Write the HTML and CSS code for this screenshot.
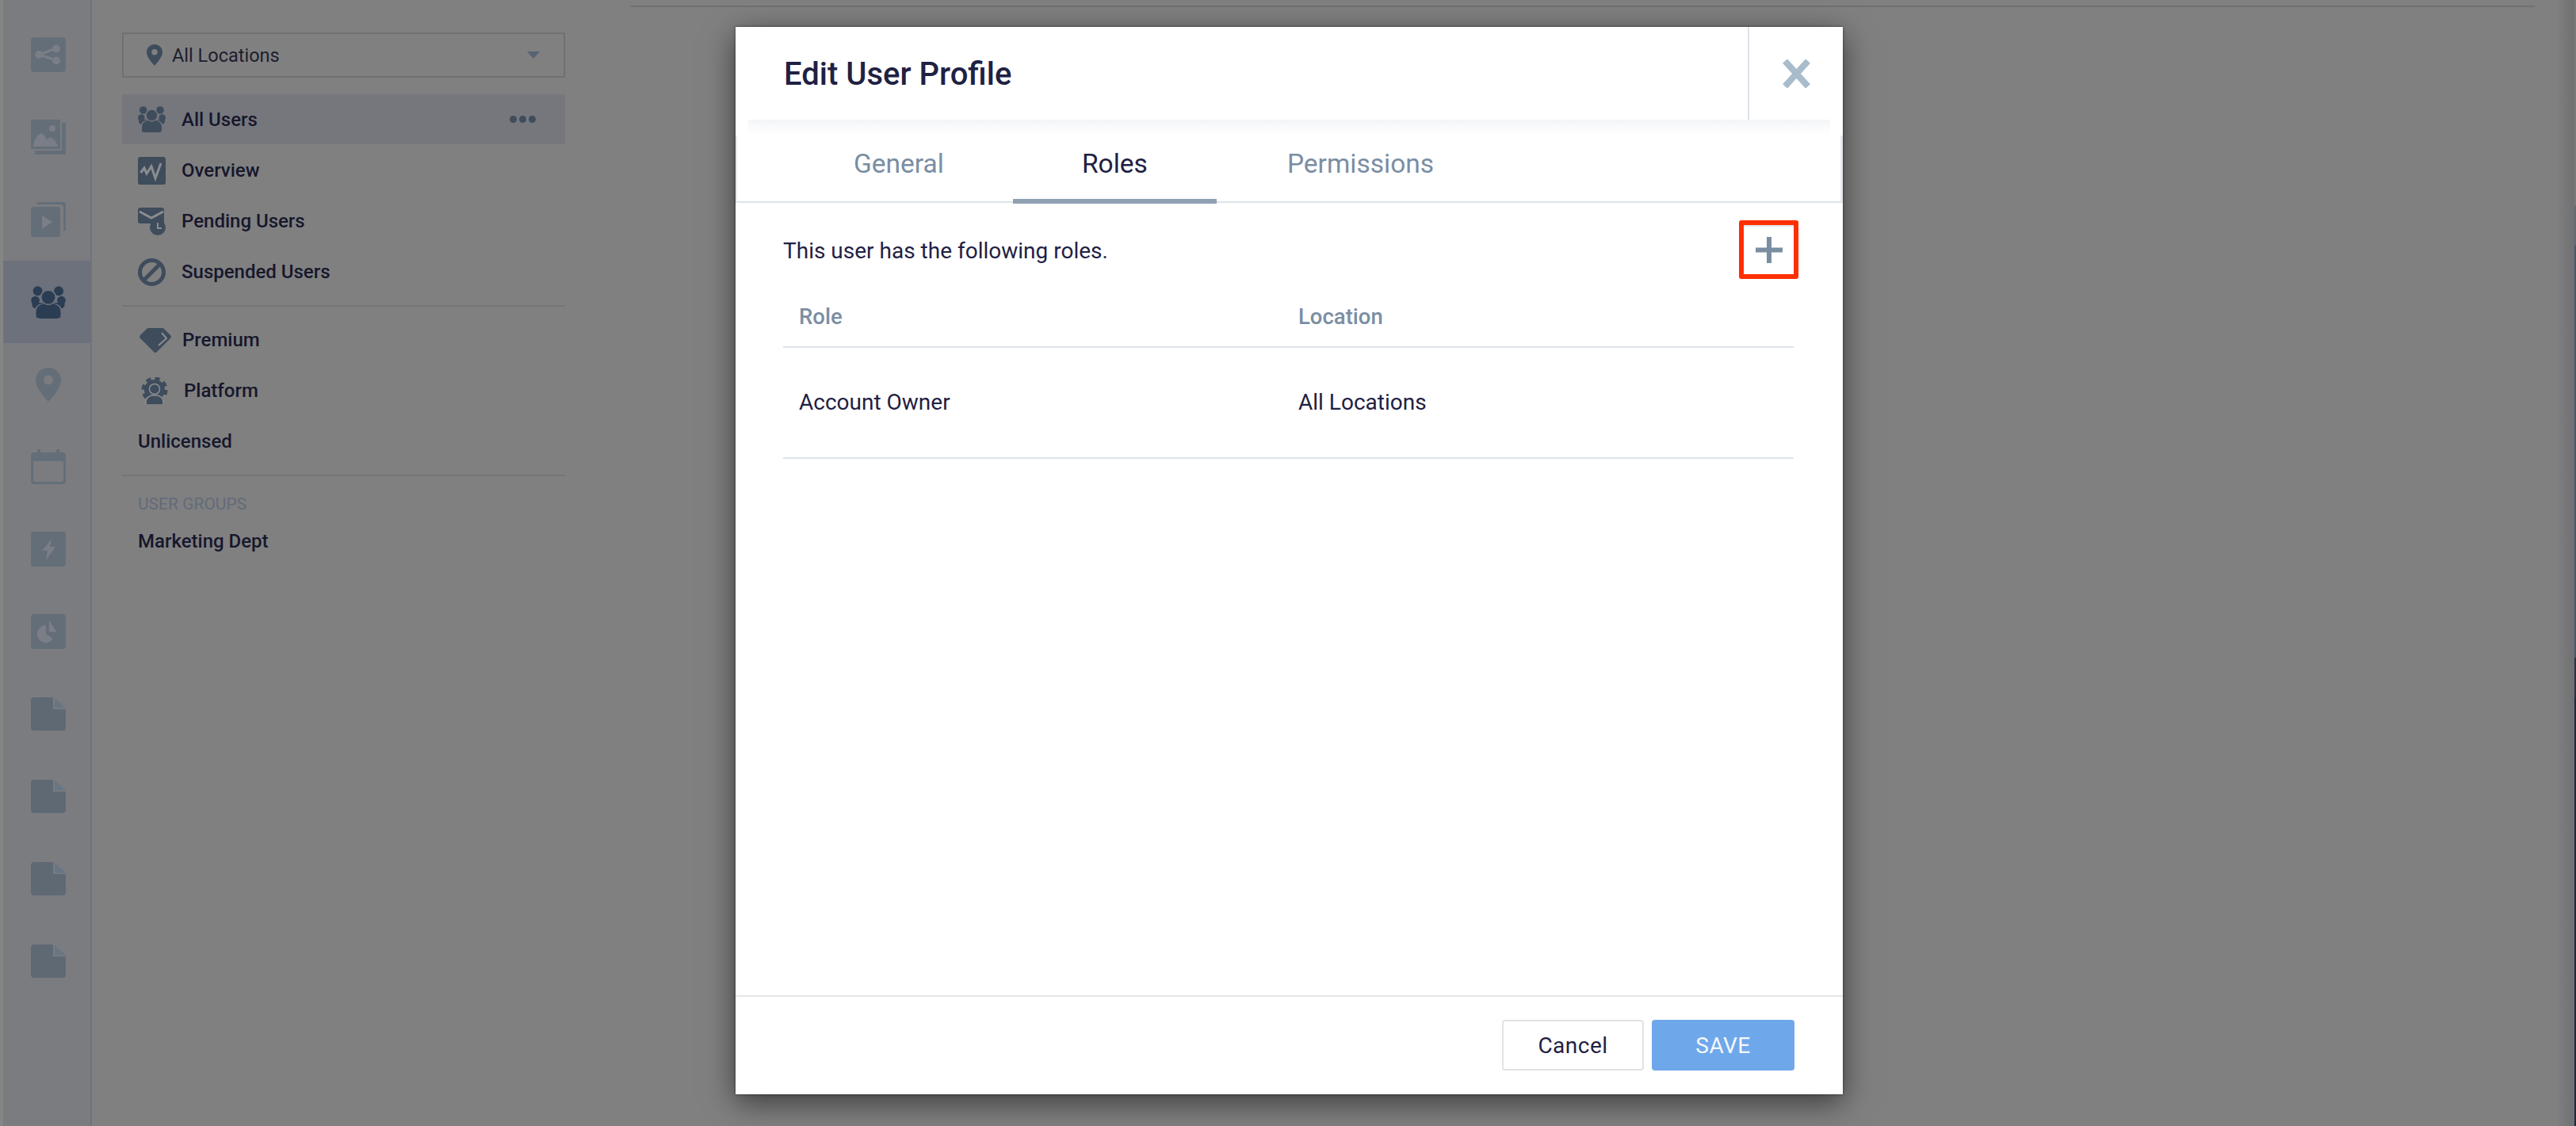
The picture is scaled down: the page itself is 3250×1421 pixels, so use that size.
FILE: index.html
```html
<!DOCTYPE html>
<html lang="en">
<head>
<meta charset="utf-8">
<title>Edit User Profile</title>
<link rel="stylesheet" href="styles.css">
</head>
<body>
<svg class="defs" width="0" height="0" aria-hidden="true">
  <symbol id="i-users" viewBox="0 0 35 33">
    <circle class="ink" cx="6.7" cy="5" r="4.8"/><circle class="ink" cx="28" cy="5" r="4.8"/>
    <circle class="ink" cx="4.3" cy="14.5" r="4.3"/><circle class="ink" cx="30.7" cy="14.5" r="4.3"/>
    <path class="ink" d="M1 17h33v3q-1 3-5 3H6q-4 0-5-3z"/>
    <circle class="ink cut-stroke" cx="17.5" cy="11.5" r="7.5"/>
    <path class="ink cut-stroke" d="M4.5 33V26q0-7 8-8 5 3 10 0 8 1 8 8v7z"/>
    <path class="ink" d="M5 28q0-9 8-10 4.500 3 9 0 8 1 8 10 0 5-4 5H9q-4 0-4-5z"/>
  </symbol>
  <symbol id="i-pin" viewBox="0 0 32 43">
    <path class="ink" fill-rule="evenodd" d="M16 0C7 0 0 7 0 16c0 11 16 27 16 27s16-16 16-27C32 7 25 0 16 0zm0 9.500a6 6 0 1 1 0 12 6 6 0 0 1 0-12z"/>
  </symbol>
  <symbol id="i-doc" viewBox="0 0 44 42">
    <path class="ink" d="M4 0H28V15H44V38a4 4 0 0 1-4 4H4a4 4 0 0 1-4-4V4a4 4 0 0 1 4-4z"/>
    <path class="ink-soft" d="M30 1 44 13.500H30z"/>
  </symbol>
</svg>

<div class="page">
  <div class="screen-edge"></div>

  <nav class="rail">
    <a class="rail-item"><svg class="rail-icon" viewBox="0 0 44 44"><rect class="ink" width="44" height="44" rx="4"/><path class="line" d="M32 14 10 22 32 29" /><circle class="cut" cx="32" cy="14.500" r="5"/><circle class="cut" cx="32" cy="29.500" r="5"/><circle class="cut" cx="10" cy="22" r="5"/></svg></a>
    <a class="rail-item"><svg class="rail-icon" viewBox="0 0 44 44"><path class="ink" d="M39 4h5v40H5v-5h34z"/><rect class="ink" width="37" height="37"/><path class="cut" d="M3 34q2-14 10-17 4 1 7 9 3-5 6-3 6 3 8 11z"/><circle class="cut" cx="27" cy="11" r="4"/></svg></a>
    <a class="rail-item"><svg class="rail-icon" viewBox="0 0 44 44"><path class="ink" d="M10 0h31a3 3 0 0 1 3 3v33h-3V7a4 4 0 0 0-4-4H7a3 3 0 0 1 3-3z"/><rect class="ink" y="6" width="37" height="38" rx="3"/><path class="cut" d="M14 17 27 25 14 34z"/></svg></a>
    <a class="rail-item rail-item-active"><svg class="rail-icon rail-users"><use href="#i-users"/></svg></a>
    <a class="rail-item"><svg class="rail-pin"><use href="#i-pin"/></svg></a>
    <a class="rail-item"><svg class="rail-icon" viewBox="0 0 44 44"><path class="ink" fill-rule="evenodd" d="M8 0h4v4h20V0h4v4h4a4 4 0 0 1 4 4v32a4 4 0 0 1-4 4H4a4 4 0 0 1-4-4V8a4 4 0 0 1 4-4h4zM3 15v24a2 2 0 0 0 2 2h34a2 2 0 0 0 2-2V15z"/></svg></a>
    <a class="rail-item"><svg class="rail-icon" viewBox="0 0 44 44"><rect class="ink" width="44" height="44" rx="4"/><path class="cut" d="M26 9 14 24h7l-2 12 12-17h-7z"/></svg></a>
    <a class="rail-item"><svg class="rail-icon" viewBox="0 0 44 44"><rect class="ink" width="44" height="44" rx="4"/><path class="cut" d="M19 14v11l9 6a11 11 0 1 1-9-17z"/><path class="cut" d="M23 8l10 15-10-1z"/></svg></a>
    <a class="rail-item rail-doc"><svg class="rail-icon-doc"><use href="#i-doc"/></svg></a>
    <a class="rail-item rail-doc"><svg class="rail-icon-doc"><use href="#i-doc"/></svg></a>
    <a class="rail-item rail-doc"><svg class="rail-icon-doc"><use href="#i-doc"/></svg></a>
    <a class="rail-item rail-doc"><svg class="rail-icon-doc"><use href="#i-doc"/></svg></a>
  </nav>

  <aside class="panel">
    <div class="loc-select">
      <svg class="loc-pin"><use href="#i-pin"/></svg>
      <span class="loc-label">All Locations</span>
      <span class="loc-arrow"></span>
    </div>

    <ul class="menu menu-first">
      <li class="menu-row menu-row-active">
        <svg class="menu-icon menu-icon-users"><use href="#i-users"/></svg>
        <span>All Users</span>
        <span class="dots"><i></i><i></i><i></i></span>
      </li>
      <li class="menu-row">
        <svg class="menu-icon" viewBox="0 0 35 35"><rect class="ink" width="35" height="35" rx="3"/><path class="wave" d="M3.500 20 8 14l3 7 6-9 5 15 7-19"/></svg>
        <span>Overview</span>
      </li>
      <li class="menu-row">
        <svg class="menu-icon" viewBox="0 0 35 35"><rect class="ink" width="33" height="20" rx="3"/><path class="wave" d="M2 5l15 8 15-8"/><circle class="ink" cx="25" cy="25" r="10"/><path class="wave thin" d="M25 19v7h5"/></svg>
        <span>Pending Users</span>
      </li>
      <li class="menu-row">
        <svg class="menu-icon" viewBox="0 0 35 35"><circle class="ring" cx="17.500" cy="17.500" r="15"/><path class="ring" d="M8 27 27 8"/></svg>
        <span>Suspended Users</span>
      </li>
    </ul>

    <ul class="menu menu-ruled">
      <li class="menu-row">
        <svg class="menu-icon-gem" viewBox="0 0 40 31"><path class="ink" d="M11 0h18q1 0 2 1l8 8q2 2 0 4L22 30q-2 2-4 0L1 13q-2-2 0-4l8-8q1-1 2-1z"/><path class="wave thin" d="M28 6l6 7-10 9"/></svg>
        <span>Premium</span>
      </li>
      <li class="menu-row">
        <svg class="menu-icon-gear" viewBox="0 0 34 35"><circle class="teeth" cx="17" cy="16" r="14"/><circle class="ink" cx="17" cy="16" r="13"/><path class="head" d="M6 35v-3q0-7 7-9h8q7 2 7 9v3z"/><circle class="head" cx="17" cy="15" r="6.500"/></svg>
        <span>Platform</span>
      </li>
      <li class="menu-row">Unlicensed</li>
    </ul>

    <div class="group-block">
      <div class="group-title">USER GROUPS</div>
      <div class="menu-row">Marketing Dept</div>
    </div>
  </aside>

  <main class="content">
    <div class="content-rule"></div>
  </main>
  <div class="shade"></div>
  <div class="desktop-edge"></div>
</div>

<section class="modal" role="dialog" aria-label="Edit User Profile">
  <header class="modal-head">
    <h1 class="modal-title">Edit User Profile</h1>
    <button class="modal-close" aria-label="Close"><svg class="close-x" viewBox="0 0 37 36"><path d="M4 2 33 34M33 2 4 34"/></svg></button>
  </header>

  <div class="tabs">
    <a class="tab">General</a>
    <a class="tab tab-active">Roles</a>
    <a class="tab tab-perm">Permissions</a>
  </div>

  <div class="modal-body">
    <div class="intro">
      <p class="intro-text">This user has the following roles.</p>
      <button class="add-btn" aria-label="Add role"><svg class="plus" viewBox="0 0 34 33"><path d="M17 0v33M0 16.500h34"/></svg></button>
    </div>
    <div class="table">
      <div class="table-row table-head"><div>Role</div><div>Location</div></div>
      <div class="table-row table-data"><div>Account Owner</div><div>All Locations</div></div>
    </div>
  </div>

  <footer class="modal-foot">
    <button class="btn btn-cancel">Cancel</button>
    <button class="btn btn-save">SAVE</button>
  </footer>
</section>
</body>
</html>
```

FILE: styles.css
```css
* { box-sizing: border-box; }
html, body { margin: 0; height: 100%; overflow: hidden; }
body { font-family: Roboto, "Liberation Sans", sans-serif; background: #808081; color: #16172c; }
.defs { position: absolute; }
ul { list-style: none; margin: 0; padding: 0; }
button { font: inherit; padding: 0; background: none; border: 0; }

.page { display: flex; height: 1421px; }
.screen-edge { width: 4px; background: #858585; }

.rail { width: 112px; padding-top: 17px; background: #7b7c80; border-right: 2px solid #6f7280; --ink: #646e78; --cut: #7b7e86; --soft: #687585; }
.rail-item { display: flex; align-items: center; justify-content: center; height: 104px; padding-left: 4px; }
.rail-item-active { background: #6d717c; --ink: #2b3d52; --cut: #6d717c; }
.rail-doc { --ink: #5f6974; }
.rail-icon { width: 44px; height: 44px; }
.rail-users { height: 41px; }
.rail-pin { width: 32px; height: 43px; }
.rail-icon-doc { width: 44px; height: 42px; }

.ink { fill: var(--ink); }
.ink-soft { fill: var(--soft); }
.cut { fill: var(--cut); }
.cut-stroke { stroke: var(--cut); stroke-width: 1.500px; }
.line { fill: none; stroke: var(--cut); stroke-width: 3px; }

.panel { width: 597px; padding: 41px 0 0 38px; --ink: #3e4c5c; --cut: #808081; --wave: #8b8d90; font-size: 24px; font-weight: 500; }

.loc-select { display: flex; align-items: center; height: 57px; padding: 0 30px 0 29px; border: 2px solid #6e7074; font-weight: 400; color: #1d1e2e; }
.loc-pin { width: 20px; height: 27px; margin-right: 12px; }
.loc-label { flex: 1; font-size: 23.500px; }
.loc-arrow { width: 0; height: 0; border-left: 8px solid transparent; border-right: 8px solid transparent; border-top: 9px solid #566372; }

.menu-first { margin-top: 21px; }
.menu-ruled { margin-top: 10px; padding: 10px 0; border-top: 2px solid #747578; border-bottom: 2px solid #747578; }
.menu-row { display: flex; align-items: center; height: 64px; padding-left: 20px; }
.menu-row-active { height: 63px; margin-bottom: 1px; background: #76777d; padding-right: 37px; --cut: #76777d; }
.menu-row-active span:nth-of-type(1) { flex: 1; }
.menu-icon { width: 35px; height: 35px; margin-right: 20px; flex: none; }
.menu-icon-users { height: 33px; }
.menu-icon-gem { width: 40px; height: 31px; margin: 0 14px 0 2px; flex: none; }
.menu-icon-gear { width: 34px; height: 35px; margin: 0 20px 0 4px; flex: none; }
.wave { fill: none; stroke: var(--wave); stroke-width: 3px; }
.thin { stroke-width: 2px; }
.ring { fill: none; stroke: var(--ink); stroke-width: 5px; }
.teeth { fill: none; stroke: var(--ink); stroke-width: 5px; stroke-dasharray: 6 5; }
.head { fill: var(--ink); stroke: var(--wave); stroke-width: 1.500px; }
.dots { display: flex; gap: 3px; }
.dots i { width: 9px; height: 9px; border-radius: 50%; background: #3e4c5c; }

.group-block { padding-top: 22px; }
.group-title { padding-left: 20px; height: 28px; line-height: 26px; font-size: 21px; font-weight: 400; color: #626b78; }

.content { flex: 1; padding: 7px 27px 0 82px; }
.content-rule { height: 2px; background: #6f7072; }
.shade { width: 23px; background: linear-gradient(90deg, #808081, #6f7072); }
.desktop-edge { width: 2px; background: linear-gradient(#7f7770 0 260px, #5e6a78 260px 310px, #44586f 310px 830px, #2c3043 830px 880px, #1e2740 880px); }

.modal { position: absolute; left: 928px; top: 34px; width: 1397px; height: 1347px; display: flex; flex-direction: column; background: #fff; box-shadow: 0 10px 36px rgba(0, 0, 0, .55), 0 0 3px rgba(0, 0, 0, .5); }
.modal-head { position: relative; z-index: 1; display: flex; align-items: center; justify-content: space-between; height: 117px; padding-left: 61px; background: #fff; }
.modal-head::after { content: ""; position: absolute; left: 16px; right: 16px; top: 100%; height: 18px; background: linear-gradient(#f4f5f7, #fff); }
.modal-title { margin: 2px 0 0; font-size: 40px; font-weight: 500; color: #1f2143; }
.modal-close { display: flex; align-items: center; justify-content: center; width: 120px; height: 117px; border-left: 2px solid #dde3e9; }
.close-x { width: 37px; height: 36px; }
.close-x path { fill: none; stroke: #a9bccb; stroke-width: 8px; }

.tabs { display: flex; height: 105px; padding-left: 62px; border-bottom: 2px solid #dde3e9; background: linear-gradient(#e6eaee, #e6eaee) left 20px / 2px 83px no-repeat, linear-gradient(#e6eaee, #e6eaee) right 20px / 3px 83px no-repeat; }
.tab { position: relative; display: flex; align-items: center; padding: 7px 87px 0; font-size: 33.500px; color: #7a8ea3; }
.tab-perm { padding-left: 89px; }
.tab-active { color: #1f2143; }
.tab-active::after { content: ""; position: absolute; left: 0; right: 0; bottom: -3px; height: 6px; background: #8fa0b3; }

.modal-body { flex: 1; padding: 22px 62px 0 60px; color: #1f2143; font-size: 28px; }
.intro { display: flex; align-items: center; justify-content: space-between; height: 74px; margin-right: -6px; }
.intro-text { margin: 2px 0 0; }
.add-btn { display: flex; align-items: center; justify-content: center; width: 75px; height: 74px; border: 6px solid #ff2f00; border-radius: 3px; box-shadow: inset 0 2px 0 #e3e3e3; }
.plus { width: 34px; height: 33px; }
.plus path { fill: none; stroke: #7a8ea3; stroke-width: 6px; }

.table { margin-top: 10px; }
.table-row { display: grid; grid-template-columns: 630px 1fr; align-items: center; padding-left: 20px; border-bottom: 2px solid #dde3e9; }
.table-head { height: 77px; font-weight: 500; font-size: 27.500px; color: #7a8ea3; }
.table-data { height: 140px; padding-bottom: 2px; }

.modal-foot { display: flex; justify-content: flex-end; gap: 10px; height: 125px; padding: 29px 61px 0 0; border-top: 2px solid #e6e6e6; }
.btn { width: 180px; height: 64px; border-radius: 4px; font-size: 28px; letter-spacing: .5px; }
.btn-cancel { width: 179px; border: 2px solid #e3e3e3; color: #1f2143; }
.btn-save { background: #6fa8ea; color: #f4f8fd; }
```
